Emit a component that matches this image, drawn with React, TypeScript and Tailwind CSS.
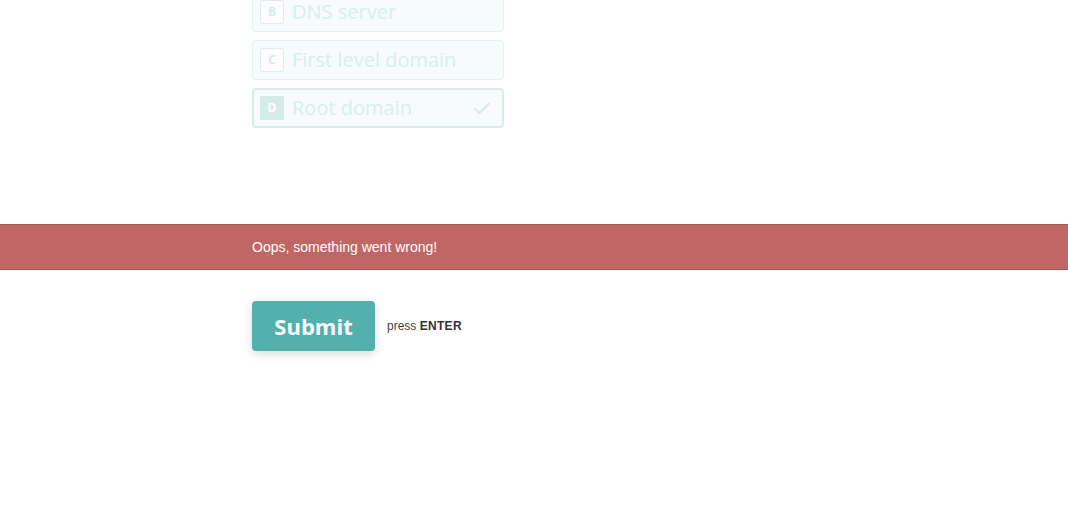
const options = [
  { key: "B", label: "DNS server", selected: false },
  { key: "C", label: "First level domain", selected: false },
  { key: "D", label: "Root domain", selected: true },
];

function Option({ k, label, selected }: { k: string; label: string; selected: boolean }) {
  return (
    <div
      className={`flex items-center h-10 w-[252px] rounded-[4px] bg-[#f8fbfb] ${
        selected ? "border-2 border-[#d8edeb] px-[6px]" : "border border-[#e3f1f0] px-[7px]"
      }`}
    >
      <span
        className={`flex h-6 w-6 items-center justify-center rounded-[2px] text-[12px] font-bold ${
          selected ? "bg-[#d4ebe9] text-white" : "border border-[#dcefee] bg-white text-[#d5eceb]"
        }`}
      >
        {k}
      </span>
      <span className="ml-2 flex-1 text-[20px] text-[#d9eeed]">{label}</span>
      {selected && (
        <svg width="18" height="14" viewBox="0 0 18 14" className="mr-[5px]">
          <path d="M1.5 7.5 L6.5 12 L16.5 2" fill="none" stroke="#d6ecea" strokeWidth="2" />
        </svg>
      )}
    </div>
  );
}

export default function App() {
  return (
    <div className="h-[525px] w-full overflow-hidden bg-white" style={{ fontFamily: '"Open Sans", sans-serif' }}>
      <div className="ml-[252px] -mt-[8px] flex flex-col gap-2">
        {options.map((o) => (
          <Option key={o.key} k={o.key} label={o.label} selected={o.selected} />
        ))}
      </div>
      <div className="mt-[96px] h-[46px] border-y border-[#a85554] bg-[#c06664] flex items-center">
        <span className="ml-[252px] text-[14px] text-white" style={{ fontFamily: '"Liberation Sans", Arial, sans-serif' }}>
          Oops, something went wrong!
        </span>
      </div>
      <div className="ml-[252px] mt-[31px] flex items-center">
        <button className="h-[50px] w-[123px] rounded-[4px] bg-[#52b1ad] text-[22px] font-bold text-white shadow-[0_3px_10px_rgba(0,0,0,0.15)]">
          Submit
        </button>
        <span className="ml-3 text-[12px] text-[#444]" style={{ fontFamily: '"Liberation Sans", Arial, sans-serif' }}>
          press <span className="font-bold tracking-[0.3px] text-[#333]">ENTER</span>
        </span>
      </div>
    </div>
  );
}
